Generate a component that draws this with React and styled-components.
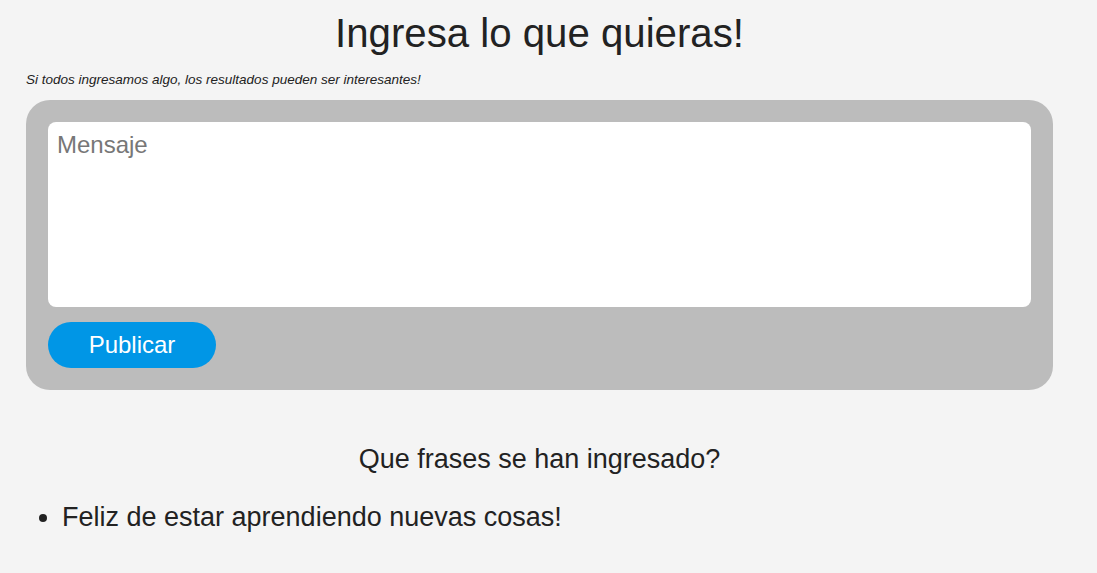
import React from 'react';
import styled, { createGlobalStyle } from 'styled-components';

const GlobalStyle = createGlobalStyle`
  html, body {
    margin: 0;
    padding: 0;
    background-color: #f4f4f4;
    font-family: "Liberation Sans", Arial, sans-serif;
    color: #222;
  }
`;

const Page = styled.div`
  width: 1027px;
  margin-left: 26px;
  padding-top: 10px;
`;

const Title = styled.h1`
  margin: 0;
  text-align: center;
  font-size: 40.2px;
  font-weight: normal;
  line-height: 48px;
`;

const Subtitle = styled.p`
  margin: 14px 0 12px;
  font-size: 13.5px;
  font-style: italic;
  line-height: 16px;
`;

const Card = styled.form`
  background-color: #bcbcbc;
  border-radius: 24px;
  padding: 22px;
  display: flex;
  flex-direction: column;
  align-items: flex-start;
  gap: 15px;
`;

const MessageInput = styled.textarea`
  box-sizing: border-box;
  width: 100%;
  height: 185px;
  border: none;
  border-radius: 8px;
  background: #fff;
  padding: 9px 9px;
  font-family: "Liberation Sans", Arial, sans-serif;
  font-size: 24px;
  resize: none;
  outline: none;
  &::placeholder {
    color: #777;
  }
`;

const PublishButton = styled.button`
  width: 168px;
  height: 46px;
  border: none;
  border-radius: 23px;
  background-color: #0096e6;
  color: #fff;
  font-family: "Liberation Sans", Arial, sans-serif;
  font-size: 24px;
  cursor: pointer;
`;

const SectionTitle = styled.h2`
  margin: 53px 0 0;
  text-align: center;
  font-size: 27px;
  font-weight: normal;
  line-height: 32px;
`;

const Phrases = styled.ul`
  margin: 26px 0 0;
  padding-left: 36px;
  font-size: 27px;
  line-height: 32px;
`;

const phrases = ['Feliz de estar aprendiendo nuevas cosas!'];

export default function App() {
  return (
    <>
      <GlobalStyle />
      <Page>
        <Title>Ingresa lo que quieras!</Title>
        <Subtitle>Si todos ingresamos algo, los resultados pueden ser interesantes!</Subtitle>
        <Card onSubmit={(e) => e.preventDefault()}>
          <MessageInput placeholder="Mensaje" />
          <PublishButton type="submit">Publicar</PublishButton>
        </Card>
        <SectionTitle>Que frases se han ingresado?</SectionTitle>
        <Phrases>
          {phrases.map((p) => (
            <li key={p}>{p}</li>
          ))}
        </Phrases>
      </Page>
    </>
  );
}
